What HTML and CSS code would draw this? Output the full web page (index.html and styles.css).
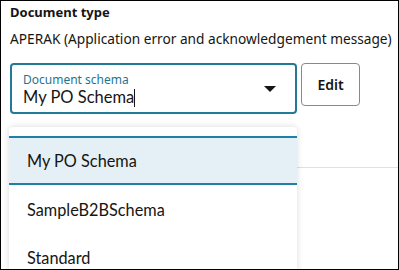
FILE: index.html
```html
<!DOCTYPE html>
<html>
<head>
<meta charset="utf-8">
<link rel="stylesheet" href="styles.css">
</head>
<body>
<div class="frame">
  <div class="content">
    <div class="field-label">Document type</div>
    <div class="field-value">APERAK (Application error and acknowledgement message)</div>
    <div class="row">
      <div class="select">
        <div class="select-text">
          <span class="select-label">Document schema</span>
          <span class="select-value">My PO Schema<span class="cursor"></span></span>
        </div>
        <svg class="caret" width="12" height="6" viewBox="0 0 12 6"><path d="M0 0 H12 L6 6 Z" fill="#161513"/></svg>
      </div>
      <button class="btn">Edit</button>
    </div>
    <div class="divider"></div>
  </div>
  <div class="dropdown">
    <ul class="list">
      <li class="item selected">My PO Schema</li>
      <li class="item">SampleB2BSchema</li>
      <li class="item">Standard</li>
    </ul>
  </div>
</div>
</body>
</html>
```
FILE: styles.css
```css
html, body { margin: 0; padding: 0; background: #fff; }
body { font-family: "Noto Sans", Lato, sans-serif; color: #161513; }
.frame {
  position: relative;
  width: 399px; height: 270px;
  box-sizing: border-box;
  border: 1px solid #000;
  overflow: hidden;
}
.content { padding: 3px 9px 0 9px; }
.field-label { font-weight: 700; font-size: 13px; line-height: 17px; }
.field-value { font-size: 13.7px; line-height: 18px; margin-top: 9px; white-space: nowrap; }
.row { display: flex; gap: 4px; margin-top: 15px; align-items: flex-start; }
.select {
  width: 287px; height: 51px; box-sizing: border-box;
  border: 2px solid #227a96; border-radius: 4px;
  display: flex; align-items: center;
  padding: 0 19px 0 11px;
}
.select-text { flex: 1; display: flex; flex-direction: column; padding-top: 2px; }
.select-label { color: #1f7493; font-size: 12px; line-height: 14px; }
.select-value { font-family: Lato, "Noto Sans", sans-serif; font-size: 16.5px; line-height: 20px; }
.cursor { display: inline-block; width: 1px; height: 18px; background: #161513; vertical-align: -4px; }
.caret { display: block; }
.btn {
  width: 59px; height: 43px; box-sizing: border-box;
  border: 1px solid #8a8987; border-radius: 4px; background: #fff;
  font-family: inherit; font-size: 14px; font-weight: 600; color: #161513;
  padding: 0; margin-left: 0;
}
.divider { height: 1px; background: #e2e1df; margin: 53px -9px 0 0; }
.dropdown {
  position: absolute; left: 8px; top: 126px;
  width: 288px; height: 160px;
  background: #fff; border-radius: 4px;
  box-shadow: 0 0 6px rgba(0,0,0,0.15);
  padding-top: 9px; box-sizing: border-box;
}
.list { list-style: none; margin: 0; padding: 0; }
.item { font-family: Lato, "Noto Sans", sans-serif; height: 48px; display: flex; align-items: center; padding-left: 18px; font-size: 16.3px; box-sizing: border-box; }
.item.selected { background: #e4f0f5; border-top: 2px solid #1f7fa6; border-bottom: 2px solid #1f7fa6; height: 49px; }
```
